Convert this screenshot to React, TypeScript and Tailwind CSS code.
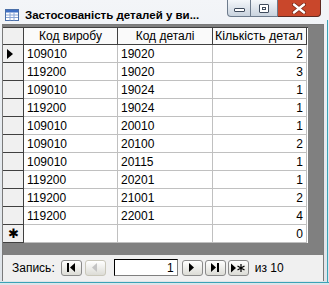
import React from "react";

const rows = [
  ["109010", "19020", "2"],
  ["119200", "19020", "3"],
  ["109010", "19024", "1"],
  ["119200", "19024", "1"],
  ["109010", "20010", "1"],
  ["109010", "20100", "2"],
  ["109010", "20115", "1"],
  ["119200", "20201", "1"],
  ["119200", "21001", "2"],
  ["119200", "22001", "4"],
];

function TitleIcon() {
  return (
    <svg width="14" height="12" viewBox="0 0 14 12">
      <rect x="0.5" y="0.5" width="13" height="11" fill="#fff" stroke="#4a6fa8" />
      <rect x="1" y="1" width="12" height="2.5" fill="#3f6fc4" />
      <path d="M1 6h12M1 8.5h12M5 3.5v8M9 3.5v8" stroke="#8aa6d6" strokeWidth="1" />
    </svg>
  );
}

function NavButton({ children, disabled }: { children: React.ReactNode; disabled?: boolean }) {
  return (
    <div
      className={`w-[21px] h-[16px] flex items-center justify-center rounded-[3px] border ${
        disabled ? "border-[#c9c7ba]" : "border-[#8a8a8a]"
      } bg-linear-to-b from-[#ffffff] to-[#dcdcd6]`}
    >
      {children}
    </div>
  );
}

export default function App() {
  return (
    <div
      className="w-[329px] h-[285px] overflow-hidden relative bg-linear-to-b from-[#f3f5f8] via-[#e6ebf0] to-[#dfe4e9]"
      style={{ fontFamily: '"Liberation Sans", Arial, sans-serif' }}
    >
      {/* title bar */}
      <div className="h-[24px] flex items-start relative">
        <div className="mt-[9px] ml-[5px]">
          <TitleIcon />
        </div>
        <div className="ml-[6px] mt-[8px] text-[11.5px] font-bold text-black leading-[14px] whitespace-nowrap">
          Застосованість деталей у ви...
        </div>
        <div className="absolute top-0 left-[227px] flex">
          <div className="w-[24px] h-[17px] rounded-bl-[4px] border border-[#6d7b8c] border-t-0 bg-linear-to-b from-[#f4f7fa] to-[#c9d3de] flex items-center justify-center">
            <div className="w-[11px] h-[4px] border border-[#3e4b5c] rounded-[1px] mt-[4px] bg-white" />
          </div>
          <div className="w-[27px] h-[17px] border border-l-0 border-[#6d7b8c] border-t-0 bg-linear-to-b from-[#f4f7fa] to-[#c9d3de] flex items-center justify-center">
            <div className="w-[10px] h-[9px] border border-[#3e4b5c] rounded-[1px] bg-white flex items-center justify-center">
              <div className="w-[4px] h-[3px] border border-[#3e4b5c]" />
            </div>
          </div>
          <div className="w-[43px] h-[17px] rounded-br-[4px] border border-l-0 border-[#5e2a22] border-t-0 bg-[#c9472b] flex items-center justify-center">
            <svg width="14" height="11" viewBox="0 0 14 11">
              <path d="M2 1.5L12 9.5M12 1.5L2 9.5" stroke="#7a2412" strokeWidth="4" strokeLinecap="round" />
              <path d="M2 1.5L12 9.5M12 1.5L2 9.5" stroke="#ffffff" strokeWidth="2.4" strokeLinecap="round" />
            </svg>
          </div>
        </div>
      </div>

      {/* client area */}
      <div className="ml-[2px] mr-[5px] border border-[#7a7a7a] border-b-0 bg-[#808080] h-[257px] flex flex-col">
        <div className="pt-[2px] flex-1">
          <div className="w-[305px] bg-white text-[12px] text-black">
            {/* header */}
            <div className="flex h-[18px] border-t border-[#404040]">
              <div className="w-[21px] bg-[#f0f0f0] border-r border-b border-[#404040]" />
              <div className="w-[94px] border-r border-b border-[#404040] flex items-center justify-center overflow-hidden whitespace-nowrap bg-[#fafafa]">
                Код виробу
              </div>
              <div className="w-[95px] border-r border-b border-[#404040] flex items-center justify-center overflow-hidden whitespace-nowrap bg-[#fafafa]">
                Код деталі
              </div>
              <div className="w-[94px] border-r border-b border-[#404040] flex items-center pl-[2px] overflow-hidden whitespace-nowrap bg-[#fafafa] text-[12.5px]">
                Кількість детал
              </div>
            </div>
            {rows.map((r, i) => (
              <div key={i} className="flex h-[18px]">
                <div className="w-[21px] bg-[#f0f0f0] border-r border-b border-[#404040] flex items-center pl-[4px]">
                  {i === 0 && (
                    <svg width="7" height="10" viewBox="0 0 7 10">
                      <path d="M0 0L6 5L0 10Z" fill="#000" />
                    </svg>
                  )}
                </div>
                <div className="w-[94px] border-r border-b border-[#c0c0c0] flex items-center pl-[3px]">
                  {r[0]}
                </div>
                <div className="w-[95px] border-r border-b border-[#c0c0c0] flex items-center pl-[3px]">
                  {r[1]}
                </div>
                <div className="w-[94px] border-r border-b border-[#c0c0c0] flex items-center justify-end pr-[3px]">
                  {r[2]}
                </div>
              </div>
            ))}
            <div className="flex h-[18px]">
              <div className="w-[21px] bg-[#f0f0f0] border-r border-b border-[#404040] flex items-center justify-center text-[13px]">
                ✱
              </div>
              <div className="w-[94px] border-r border-b border-[#c0c0c0]" />
              <div className="w-[95px] border-r border-b border-[#c0c0c0]" />
              <div className="w-[94px] border-r border-b border-[#c0c0c0] flex items-center justify-end pr-[3px]">
                0
              </div>
            </div>
          </div>
        </div>

        {/* status bar */}
        <div className="h-[26px] bg-[#f0f0f0] flex items-center text-[12px] text-black pl-[9px] pb-[1px]">
          <span>Запись:</span>
          <div className="ml-[6px] flex gap-[3px]">
            <NavButton>
              <svg width="9" height="9" viewBox="0 0 9 9">
                <path d="M0 0h2v9H0z M8 0L3 4.5L8 9Z" fill="#000" />
              </svg>
            </NavButton>
            <NavButton disabled>
              <svg width="6" height="9" viewBox="0 0 6 9">
                <path d="M5 0L0 4.5L5 9Z" fill="#c4c4c4" />
              </svg>
            </NavButton>
          </div>
          <div className="ml-[8px] w-[64px] h-[17px] bg-white border border-[#7f7f7f] border-t-black border-l-black flex items-center justify-end pr-[3px]">
            1
          </div>
          <div className="ml-[4px] flex gap-[2px]">
            <NavButton>
              <svg width="6" height="9" viewBox="0 0 6 9">
                <path d="M0 0L5 4.5L0 9Z" fill="#000" />
              </svg>
            </NavButton>
            <NavButton>
              <svg width="9" height="9" viewBox="0 0 9 9">
                <path d="M0 0L5 4.5L0 9Z M6 0h2v9H6z" fill="#000" />
              </svg>
            </NavButton>
            <NavButton>
              <svg width="14" height="10" viewBox="0 0 14 10">
                <path d="M0 0.5L5 5L0 9.5Z" fill="#000" />
                <path d="M10 1v8M6.5 3l7 4M6.5 7l7-4" stroke="#000" strokeWidth="1.2" />
              </svg>
            </NavButton>
          </div>
          <span className="ml-[6px]">из 10</span>
        </div>
      </div>
      <div className="absolute left-0 right-0 bottom-[2px] h-[1px] bg-[#3aa3b7]" />
      <div className="absolute right-[1px] top-[20px] bottom-[2px] w-[1px] bg-[#3aa3b7]" />
    </div>
  );
}
